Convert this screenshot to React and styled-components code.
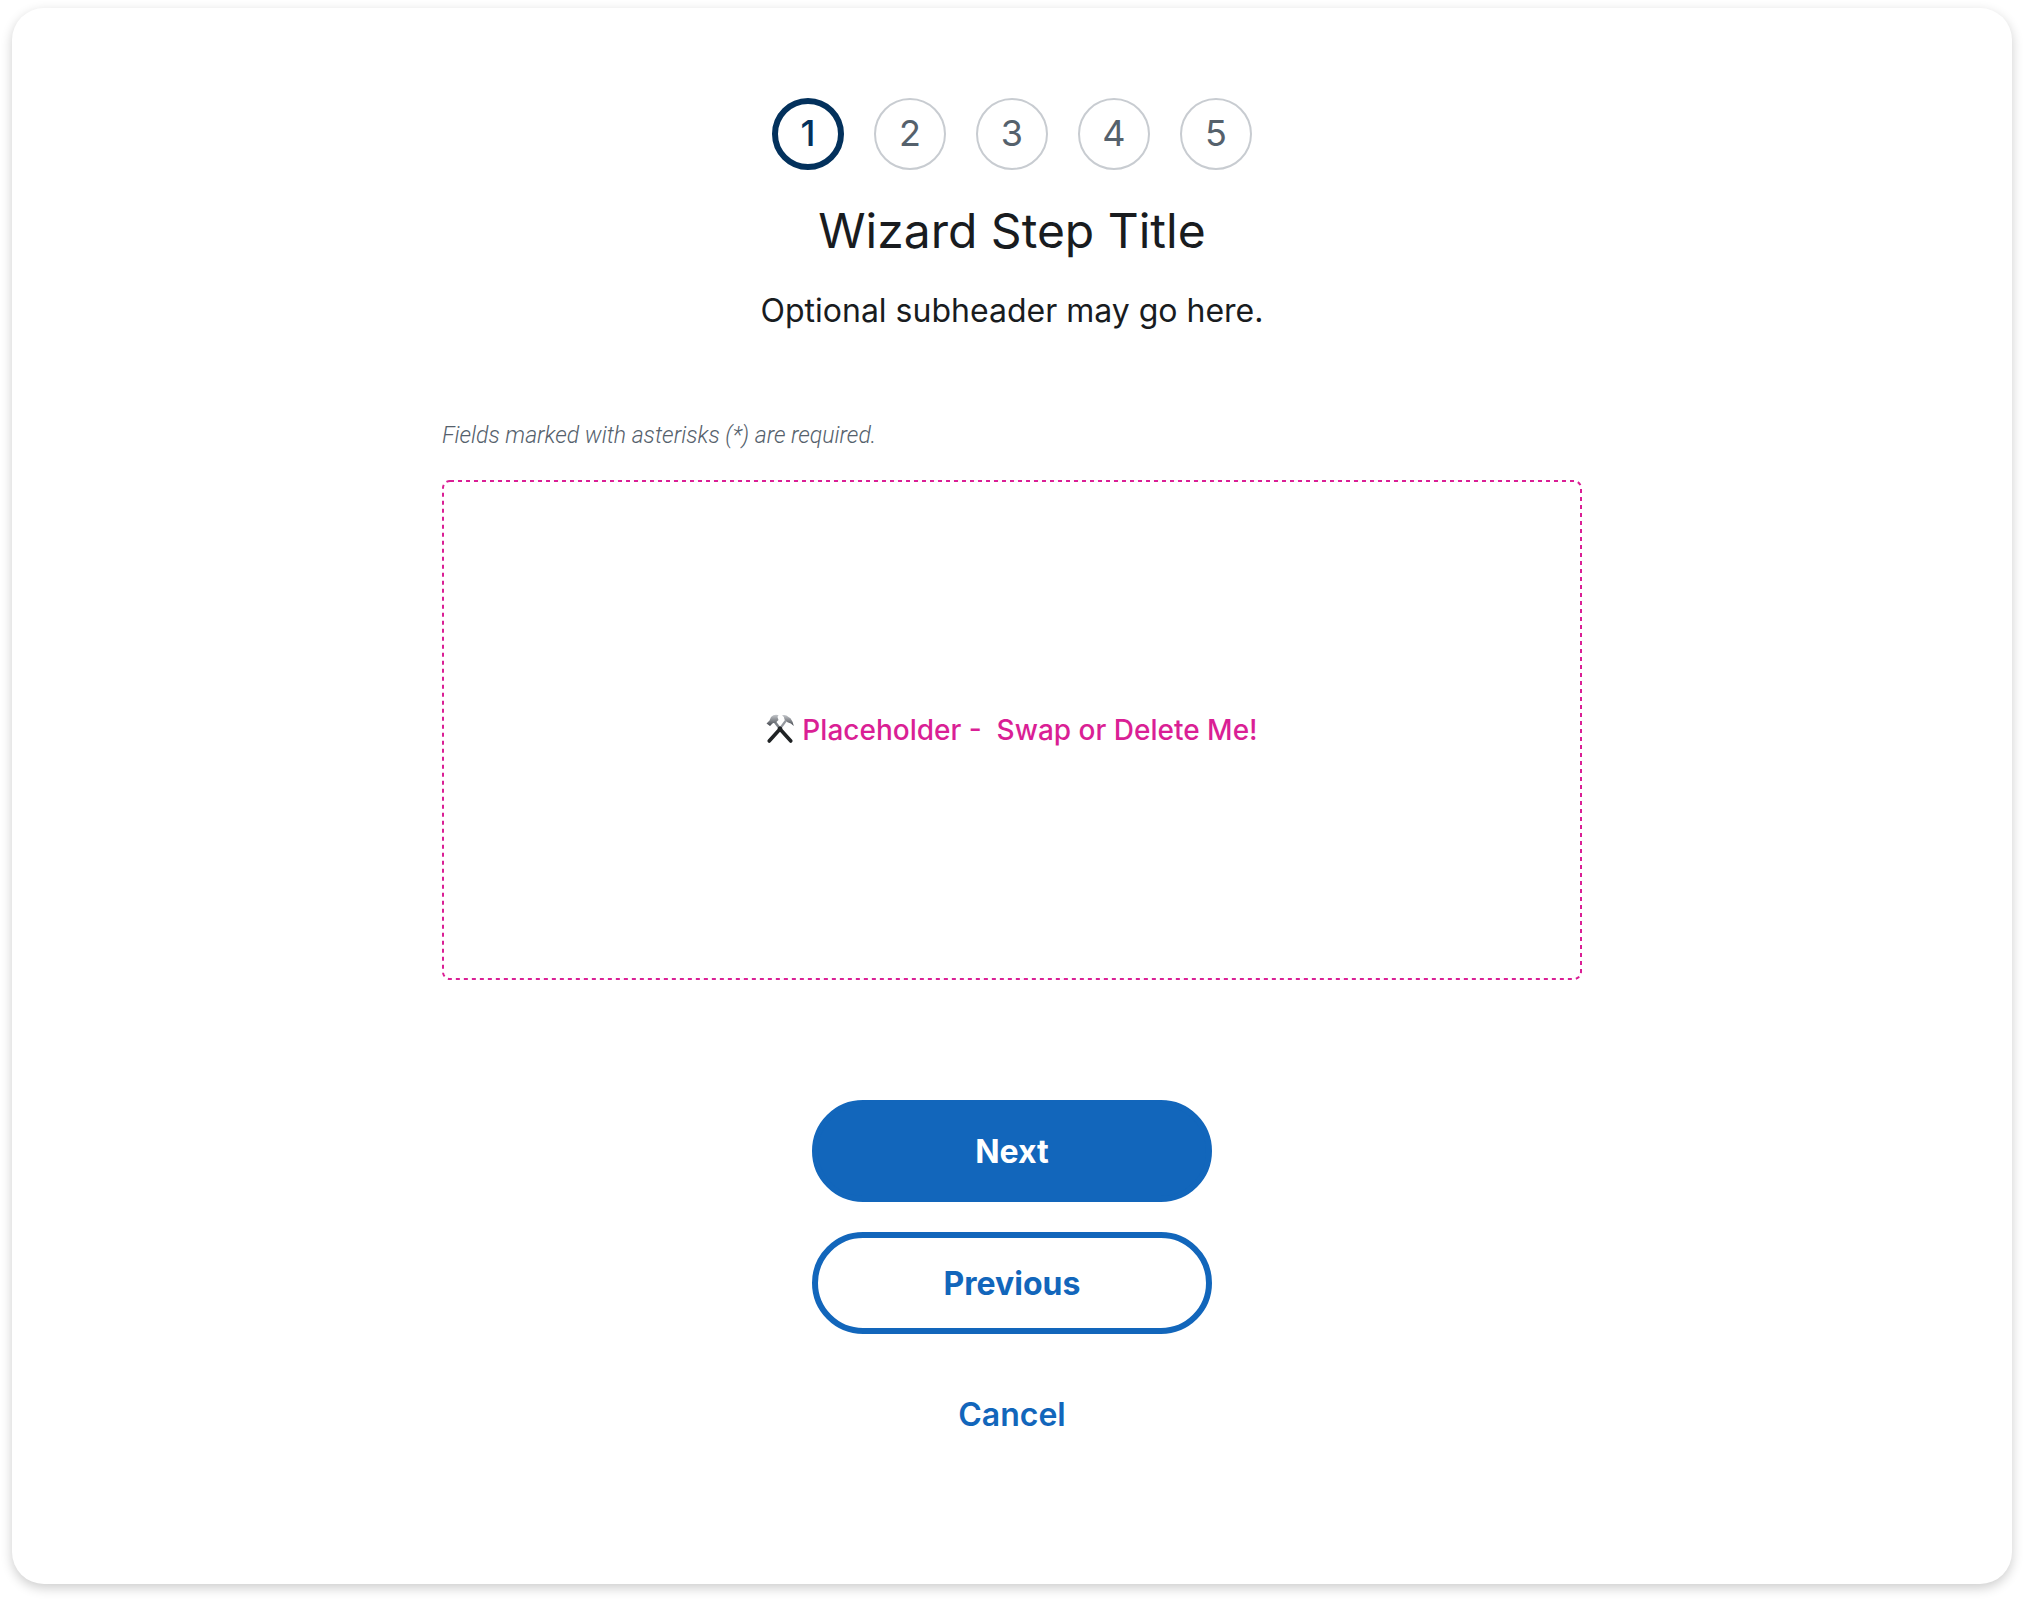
import React from "react";
import styled, { createGlobalStyle } from "styled-components";

const colors = {
  primary: "#1266bb",
  navy: "#03315c",
  magenta: "#da1f95",
  text: "#191c1f",
  muted: "#55616c",
  line: "#c8ccd1",
};

const GlobalStyle = createGlobalStyle`
  *, *::before, *::after { box-sizing: border-box; }
  body {
    margin: 0;
    background: #fff;
    color: ${colors.text};
    font-family: Inter, "Liberation Sans", sans-serif;
    font-optical-sizing: none;
  }
`;

const Page = styled.div`
  min-height: 100vh;
  padding: 8px 12px 16px;
  display: flex;
`;

const Card = styled.main`
  flex: 1;
  display: flex;
  flex-direction: column;
  align-items: center;
  padding: 90px 32px;
  border-radius: 32px;
  background: #fff;
  box-shadow: 0 4px 12px rgba(0, 0, 0, 0.2);
`;

const Header = styled.header`
  display: flex;
  flex-direction: column;
  align-items: center;
  gap: 30px;
  text-align: center;
`;

const Steps = styled.ol`
  display: flex;
  gap: 30px;
  margin: 0;
  padding: 0;
  list-style: none;
`;

const Step = styled.li`
  display: flex;
  align-items: center;
  justify-content: center;
  width: 72px;
  height: 72px;
  padding-bottom: 2px;
  border-radius: 50%;
  border: ${(p) => (p.$active ? `6px solid ${colors.navy}` : `2px solid ${colors.line}`)};
  color: ${(p) => (p.$active ? colors.navy : colors.muted)};
  font-size: 36px;
  font-weight: ${(p) => (p.$active ? 500 : 400)};
  line-height: 40px;
`;

const Title = styled.h1`
  margin: 0;
  font-size: 48px;
  font-weight: 400;
  line-height: 62px;
`;

const Subheader = styled.p`
  margin: 0;
  font-size: 32px;
  line-height: 38px;
`;

const Form = styled.form`
  display: flex;
  flex-direction: column;
  align-items: center;
  width: 100%;
  max-width: 1140px;
  margin-top: 90px;
`;

const RequiredNote = styled.p`
  align-self: flex-start;
  margin: 0 0 28px;
  color: ${colors.muted};
  font-family: Roboto, "Liberation Sans", sans-serif;
  font-size: 23px;
  font-style: italic;
  font-weight: 300;
  line-height: 32px;
`;

const Placeholder = styled.section`
  position: relative;
  display: flex;
  align-items: center;
  justify-content: center;
  gap: 8px;
  width: 100%;
  min-height: 500px;
  color: ${colors.magenta};
  font-size: 28px;
  font-weight: 500;
  line-height: 40px;
  white-space: pre-wrap;
`;

const Outline = styled.svg`
  position: absolute;
  inset: 0;
  width: 100%;
  height: 100%;
  pointer-events: none;

  rect {
    width: calc(100% - 2px);
    height: calc(100% - 2px);
    fill: none;
    stroke: ${colors.magenta};
    stroke-width: 2px;
    stroke-dasharray: 4 4;
  }
`;

const ToolIcon = styled.svg`
  flex: none;
  width: 28px;
  height: 32px;
`;

const Actions = styled.div`
  display: flex;
  flex-direction: column;
  gap: 30px;
  width: 400px;
  margin-top: 120px;
`;

const Button = styled.button`
  height: 102px;
  padding: ${(p) => (p.$variant === "text" ? "0" : "2px 0 0")};
  border: 6px solid ${(p) => (p.$variant === "text" ? "transparent" : colors.primary)};
  border-radius: 51px;
  background: ${(p) => (p.$variant === "filled" ? colors.primary : "transparent")};
  color: ${(p) => (p.$variant === "filled" ? "#fff" : colors.primary)};
  font-family: inherit;
  font-size: 32px;
  font-weight: ${(p) => (p.$variant === "text" ? 600 : 700)};
  line-height: 40px;
  cursor: pointer;
`;

function HammerAndPick() {
  return (
    <ToolIcon viewBox="0 0 28 32" aria-hidden="true">
      <defs>
        <linearGradient id="steel" x1="0" y1="0" x2="0" y2="1">
          <stop offset="0" stopColor="#c4c7cb" />
          <stop offset="1" stopColor="#44484e" />
        </linearGradient>
      </defs>
      <path d="M8.5 7.5 L15 16" stroke="#7c8187" strokeWidth="2.6" />
      <path d="M20 6.5 L13 16" stroke="#95999f" strokeWidth="2.2" />
      <path d="M13.5 14.5 L24.800 27" stroke="#202325" strokeWidth="3.6" strokeLinecap="round" />
      <path d="M14.5 14.5 L3.200 27" stroke="#202325" strokeWidth="3.6" strokeLinecap="round" />
      <path
        d="M.5 9.500 L4 12 L6.500 9.500 Q7.500 8.500 9.500 8.800 L12.500 6 L11.500 3 Q12 1.500 12.800 1.200 Q8 -.2 5 3 L3.500 6.500 Z"
        fill="url(#steel)"
      />
      <path
        d="M16 1.300 Q20 .2 22.500 3 L24.500 4.200 Q27 7.500 27.800 12 Q25 8.800 21.500 8.200 L18.500 5.500 Q18.500 2.700 16 1.300 Z"
        fill="url(#steel)"
      />
    </ToolIcon>
  );
}

const steps = [1, 2, 3, 4, 5];

export default function App() {
  const current = 1;
  return (
    <>
      <GlobalStyle />
      <Page>
        <Card>
          <Header>
            <Steps>
              {steps.map((n) => (
                <Step key={n} $active={n === current} aria-current={n === current ? "step" : undefined}>
                  {n}
                </Step>
              ))}
            </Steps>
            <Title>Wizard Step Title</Title>
            <Subheader>Optional subheader may go here.</Subheader>
          </Header>
          <Form onSubmit={(e) => e.preventDefault()}>
            <RequiredNote>Fields marked with asterisks (*) are required.</RequiredNote>
            <Placeholder>
              <Outline aria-hidden="true">
                <rect x="1" y="1" rx="7" />
              </Outline>
              <HammerAndPick />
              <span>{"Placeholder -  Swap or Delete Me!"}</span>
            </Placeholder>
            <Actions>
              <Button type="submit" $variant="filled">Next</Button>
              <Button type="button" $variant="outlined">Previous</Button>
              <Button type="button" $variant="text">Cancel</Button>
            </Actions>
          </Form>
        </Card>
      </Page>
    </>
  );
}
